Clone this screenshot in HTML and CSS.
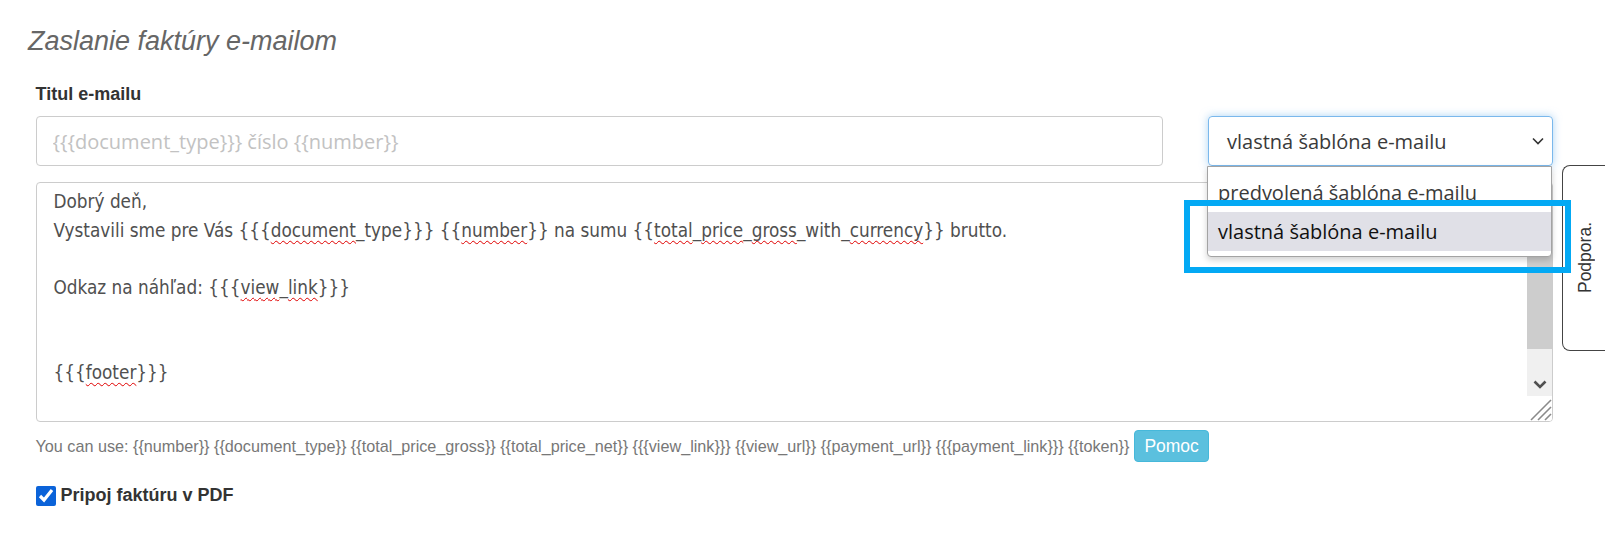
FILE: index.html
```html
<!DOCTYPE html>
<html lang="sk">
<head>
<meta charset="utf-8">
<title>Zaslanie faktúry e-mailom</title>
<link rel="stylesheet" href="styles.css">
</head>
<body>
<div class="page">
  <h1 class="title">Zaslanie faktúry e-mailom</h1>
  <div class="form">
    <label class="field-label" for="subject">Titul e-mailu</label>
    <div class="subject-row">
      <input id="subject" class="input" type="text" placeholder="{{{document_type}}} číslo {{number}}">
      <div class="select">
        <span>vlastná šablóna e-mailu</span>
        <svg class="select-caret" width="12" height="8" viewBox="0 0 12 8"><polyline points="1,1.5 6,6.5 11,1.5" fill="none" stroke="#333" stroke-width="1.6"/></svg>
      </div>
    </div>
    <div class="editor">
      <div class="editor-text"><div>Dobrý deň,</div><div>Vystavili sme pre Vás {{{<span class="sp">document</span>_type}}} {{<span class="sp">number</span>}} na sumu {{<span class="sp">total</span>_<span class="sp">price</span>_<span class="sp">gross</span>_with_<span class="sp">currency</span>}} brutto.</div><div class="blank">&nbsp;</div><div>Odkaz na náhľad: {{{<span class="sp">view</span>_<span class="sp">link</span>}}}</div><div class="blank">&nbsp;</div><div class="blank">&nbsp;</div><div>{{{<span class="sp">footer</span>}}}</div><div class="blank">&nbsp;</div><div>Ak máte otázky, kontaktujte nás.</div></div>
      <div class="scrollbar">
        <div class="sb-thumb"></div>
        <div class="sb-track"></div>
        <div class="sb-down"><svg width="14" height="9" viewBox="0 0 14 9"><polyline points="1.5,1.5 7,7 12.5,1.5" fill="none" stroke="#505050" stroke-width="2.6"/></svg></div>
        <div class="sb-corner"><svg width="24" height="24" viewBox="0 0 24 24"><g stroke="#8a8a8a" stroke-width="1.6"><line x1="3" y1="23" x2="23" y2="3"/><line x1="10" y1="23" x2="23" y2="10"/><line x1="17" y1="23" x2="23" y2="17"/></g></svg></div>
      </div>
    </div>
    <div class="hint-row">
      <span class="hint">You can use: {{number}} {{document_type}} {{total_price_gross}} {{total_price_net}} {{{view_link}}} {{view_url}} {{payment_url}} {{{payment_link}}} {{token}}</span>
      <button class="btn-help" type="button">Pomoc</button>
    </div>
    <label class="check-row"><input type="checkbox" checked><span>Pripoj faktúru v PDF</span></label>
  </div>
</div>

<div class="select-popup">
  <div class="option">predvolená šablóna e-mailu</div>
  <div class="option active">vlastná šablóna e-mailu</div>
</div>
<div class="support-tab"><span>Podpora.</span></div>
<div class="highlight"></div>
</body>
</html>
```

FILE: styles.css
```css
* { box-sizing: border-box; }
html, body { margin: 0; }
body {
  width: 1605px;
  height: 558px;
  overflow: hidden;
  position: relative;
  background: #fff;
  font-family: "Liberation Sans", Arial, sans-serif;
  color: #333;
}
.page { padding: 25px 52px 0 28px; }
.title {
  margin: 0;
  font-size: 27px;
  line-height: 32px;
  font-style: italic;
  font-weight: normal;
  color: #666;
}
.form { padding-left: 7.5px; margin-top: 25px; }
.field-label {
  display: block;
  font-weight: bold;
  font-size: 18px;
  line-height: 25px;
  color: #333;
}
.subject-row {
  display: grid;
  grid-template-columns: 1fr 345px;
  column-gap: 45px;
  margin-top: 9px;
}
.input {
  height: 50px;
  width: 100%;
  border: 1px solid #ccc;
  border-radius: 4px;
  padding: 0 16px;
  font: 20px "Open Sans", sans-serif;
  color: #555;
  outline: none;
}
.input::placeholder { color: #c2c2c2; }
.select {
  height: 50px;
  border: 1px solid #7ab8ec;
  border-radius: 4px;
  box-shadow: 0 0 8px rgba(102, 175, 233, .55);
  display: flex;
  align-items: center;
  justify-content: space-between;
  padding: 0 8px 0 18px;
  font: 20px "Open Sans", sans-serif;
  color: #3a3a3a;
}
.editor {
  margin-top: 16px;
  height: 240px;
  border: 1px solid #ccc;
  border-radius: 4px;
  display: flex;
  overflow: hidden;
}
.editor-text {
  flex: 1;
  padding: 5px 16px 0 17px;
  font: 18.8px/28.57px "DejaVu Sans Condensed", "DejaVu Sans", sans-serif;
  color: #505050;
  overflow: hidden;
  white-space: nowrap;
}
.sp {
  text-decoration: underline wavy #e00000;
  text-decoration-thickness: 1px;
  text-underline-offset: 3px;
  text-decoration-skip-ink: none;
}
.scrollbar { width: 25px; display: flex; flex-direction: column; }
.sb-thumb { flex: 1; background: #cdcdcd; }
.sb-track { height: 23px; background: #f0f0f0; }
.sb-down {
  height: 24px;
  background: #f0f0f0;
  display: flex;
  align-items: center;
  justify-content: center;
}
.sb-corner {
  height: 25px;
  background: #fff;
  display: flex;
  align-items: flex-end;
  justify-content: flex-end;
}
.hint-row {
  margin-top: 8px;
  height: 32px;
  display: flex;
  align-items: center;
}
.hint { font-size: 16.2px; color: #777; white-space: nowrap; }
.btn-help {
  margin-left: 5px;
  height: 32px;
  padding: 0 9px;
  border: 1px solid #46b8da;
  border-radius: 4px;
  background: #5bc0de;
  color: #fff;
  font: 17.5px "Liberation Sans", Arial, sans-serif;
}
.check-row {
  margin-top: 21px;
  display: flex;
  align-items: center;
  gap: 5px;
  font-weight: bold;
  font-size: 18px;
  line-height: 25px;
  color: #333;
}
.check-row input {
  width: 20px;
  height: 20px;
  margin: 0;
  accent-color: #0b63d9;
}

/* open native select popup */
.select-popup {
  position: absolute;
  left: 1207px;
  top: 166px;
  width: 345px;
  height: 91px;
  padding: 6px 0 5px;
  background: #fff;
  border: 1px solid #a3a3a3;
  border-radius: 0 0 4px 4px;
  box-shadow: 0 3px 6px rgba(0, 0, 0, .18);
  font: 20px "Open Sans", sans-serif;
  z-index: 5;
}
.option {
  height: 39px;
  line-height: 39px;
  padding-left: 10px;
  color: #3a3a3a;
  white-space: nowrap;
}
.option.active { background: #e0e0e7; color: #111; }

/* floating support tab */
.support-tab {
  position: absolute;
  left: 1562px;
  top: 165px;
  width: 43px;
  height: 186px;
  padding-left: 3px;
  background: #fff;
  border: 1px solid #444;
  border-right: none;
  border-radius: 8px 0 0 8px;
  display: flex;
  align-items: center;
  justify-content: center;
  z-index: 4;
}
.support-tab span {
  writing-mode: vertical-rl;
  transform: rotate(180deg);
  font-size: 17.5px;
  color: #333;
}

/* annotation box */
.highlight {
  position: absolute;
  left: 1184px;
  top: 200px;
  width: 387px;
  height: 73px;
  border: 6px solid #03a9f4;
  z-index: 10;
}
```
